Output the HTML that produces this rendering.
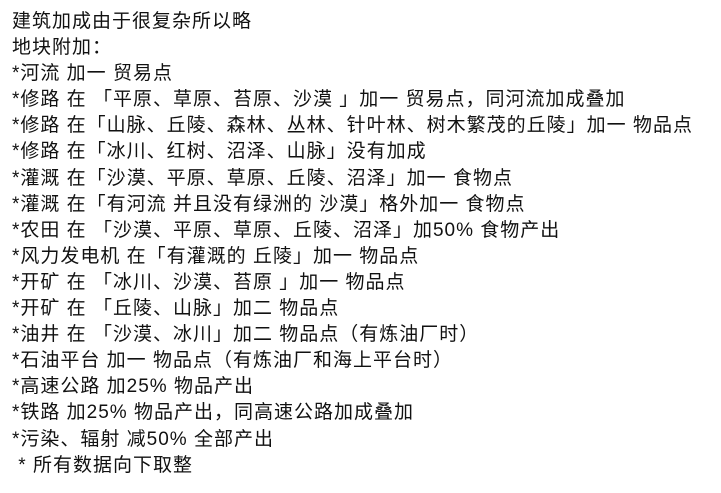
<!DOCTYPE html>
<html><head><meta charset="utf-8"><style>
body{margin:0;background:#fff;width:721px;height:493px;overflow:hidden}
.t{position:absolute;left:12px;top:9px;font-family:"Liberation Sans","Noto Sans CJK SC",sans-serif;font-size:19px;letter-spacing:1px;line-height:26.1px;color:#111;white-space:pre}
</style></head><body><div class="t">建筑加成由于很复杂所以略
地块附加：
*河流 加一 贸易点
*修路 在 「平原、草原、苔原、沙漠 」加一 贸易点，同河流加成叠加
*修路 在「山脉、丘陵、森林、丛林、针叶林、树木繁茂的丘陵」加一 物品点
*修路 在「冰川、红树、沼泽、山脉」没有加成
*灌溉 在「沙漠、平原、草原、丘陵、沼泽」加一 食物点
*灌溉 在「有河流 并且没有绿洲的 沙漠」格外加一 食物点
*农田 在 「沙漠、平原、草原、丘陵、沼泽」加50% 食物产出
*风力发电机 在「有灌溉的 丘陵」加一 物品点
*开矿 在 「冰川、沙漠、苔原 」加一 物品点
*开矿 在 「丘陵、山脉」加二 物品点
*油井 在 「沙漠、冰川」加二 物品点（有炼油厂时）
*石油平台 加一 物品点（有炼油厂和海上平台时）
*高速公路 加25% 物品产出
*铁路 加25% 物品产出，同高速公路加成叠加
*污染、辐射 减50% 全部产出
 * 所有数据向下取整</div></body></html>
